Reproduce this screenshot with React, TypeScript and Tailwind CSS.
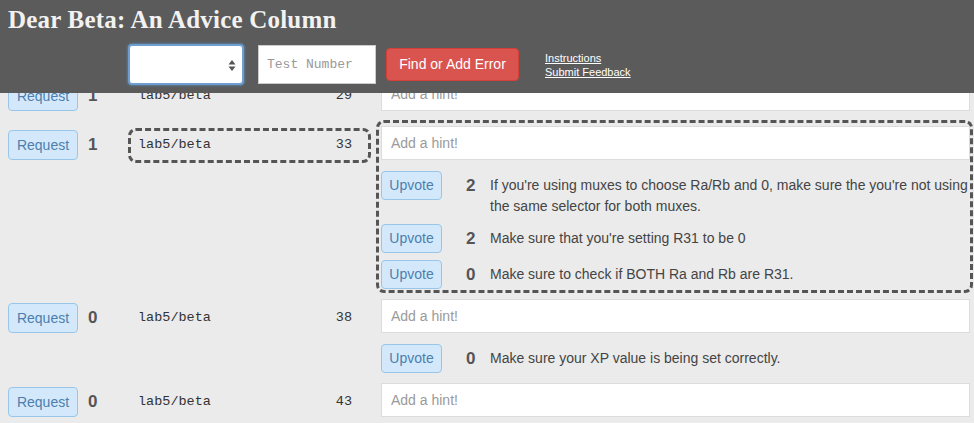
import React from "react";

type Hint = { votes: number; text: string };
type Row = { req: number; n: number; hints: Hint[]; hl?: boolean };

const rows: Row[] = [
  { req: 1, n: 29, hints: [] },
  {
    req: 1,
    n: 33,
    hl: true,
    hints: [
      {
        votes: 2,
        text: "If you're using muxes to choose Ra/Rb and 0, make sure the you're not using the same selector for both muxes.",
      },
      { votes: 2, text: "Make sure that you're setting R31 to be 0" },
      { votes: 0, text: "Make sure to check if BOTH Ra and Rb are R31." },
    ],
  },
  {
    req: 0,
    n: 38,
    hints: [{ votes: 0, text: "Make sure your XP value is being set correctly." }],
  },
  { req: 0, n: 43, hints: [] },
];

function RowView({ r }: { r: Row }) {
  return (
    <div className={`flex items-start pl-[8px] ${r.hl ? "mt-[5px]" : ""}`}>
      <button className="mt-[10px] w-[70px] h-[30px] shrink-0 rounded-[4px] border border-[#98c6ea] bg-[#d3e9fb] text-[14px] text-[#4d7ead] font-['Liberation_Sans',Arial,sans-serif]">
        Request
      </button>
      <div className="mt-[10px] h-[30px] w-[50px] shrink-0 pl-[10px] flex items-center text-[17px] font-bold text-[#555] font-['Liberation_Sans',Arial,sans-serif]">
        {r.req}
      </div>
      <div
        className={`mt-[8px] h-[35px] w-[243px] shrink-0 rounded-[8px] border-[3px] ${
          r.hl ? "border-dashed border-[#555]" : "border-transparent"
        } flex items-center justify-between pl-[7px] pr-[16px] text-[13.5px] text-[#333] font-['Liberation_Mono','Courier_New',monospace]`}
      >
        <span>lab5/beta</span>
        <span>{r.n}</span>
      </div>
      <div
        className={`ml-[5px] w-[597px] shrink-0 rounded-[8px] border-[3px] ${
          r.hl ? "border-dashed border-[#555]" : "border-transparent"
        } pl-[2px] pt-[3px] pb-[1px] flex flex-col`}
      >
        <input
          placeholder="Add a hint!"
          className="h-[34px] w-[589px] border border-[#dcdcdc] bg-white px-[9px] text-[14px] text-[#333] placeholder:text-[#9a9a9a] outline-none font-['Liberation_Sans',Arial,sans-serif]"
        />
        {r.hints.length > 0 && (
          <div className="mt-[11px] flex flex-col gap-[7px]">
            {r.hints.map((h, i) => (
              <div key={i} className="flex items-start font-['Liberation_Sans',Arial,sans-serif]">
                <button className="w-[61px] h-[29px] shrink-0 rounded-[4px] border border-[#98c6ea] bg-[#d3e9fb] text-[14px] text-[#4d7ead]">
                  Upvote
                </button>
                <div className="ml-[24px] w-[24px] shrink-0 mt-[4px] leading-[21px] text-[17px] font-bold text-[#555]">
                  {h.votes}
                </div>
                <div className="mt-[4px] w-[484px] leading-[21px] text-[14px] text-[#444]">{h.text}</div>
              </div>
            ))}
          </div>
        )}
      </div>
    </div>
  );
}

export default function App() {
  return (
    <div className="relative w-[974px] h-[423px] overflow-hidden bg-[#ebebeb]">
      <div className="absolute top-0 left-0 right-0 h-[93px] bg-[#5b5b5b] z-10">
        <div className="pl-[8px] pt-[5px] h-[40px] text-[25px] tracking-[0.2px] font-bold leading-[30px] text-[#f2f2f2] font-['Liberation_Serif','Times_New_Roman',serif]">
          Dear Beta: An Advice Column
        </div>
        <div className="flex items-center pl-[128px] mt-[4px] h-[41px]">
          <div className="relative h-[41px] w-[116px] rounded-[4px] bg-white border-[2px] border-[#6f9fd0] shadow-[0_0_3px_#5b9bd5]">
            <svg className="absolute right-[6px] top-[14px]" width="8" height="11" viewBox="0 0 8 11">
              <path d="M4 0 L7.5 4.5 L0.5 4.5 Z" fill="#555" />
              <path d="M4 11 L7.5 6.5 L0.5 6.5 Z" fill="#555" />
            </svg>
          </div>
          <input
            placeholder="Test Number"
            className="ml-[14px] h-[39px] w-[118px] bg-white border border-[#ccc] pl-[8px] text-[13px] placeholder:text-[#999] outline-none font-['Liberation_Mono','Courier_New',monospace]"
          />
          <button className="ml-[10px] h-[33px] w-[133px] rounded-[4px] bg-[#d9534f] border border-[#d43f3a] text-[14px] text-white font-['Liberation_Sans',Arial,sans-serif]">
            Find or Add Error
          </button>
          <div className="ml-[26px] flex flex-col text-[11px] leading-[14px] text-white underline font-['Liberation_Sans',Arial,sans-serif]">
            <span>Instructions</span>
            <span>Submit Feedback</span>
          </div>
        </div>
      </div>
      <div className="pt-[71px]">
        {rows.map((r, i) => (
          <RowView key={i} r={r} />
        ))}
      </div>
    </div>
  );
}
